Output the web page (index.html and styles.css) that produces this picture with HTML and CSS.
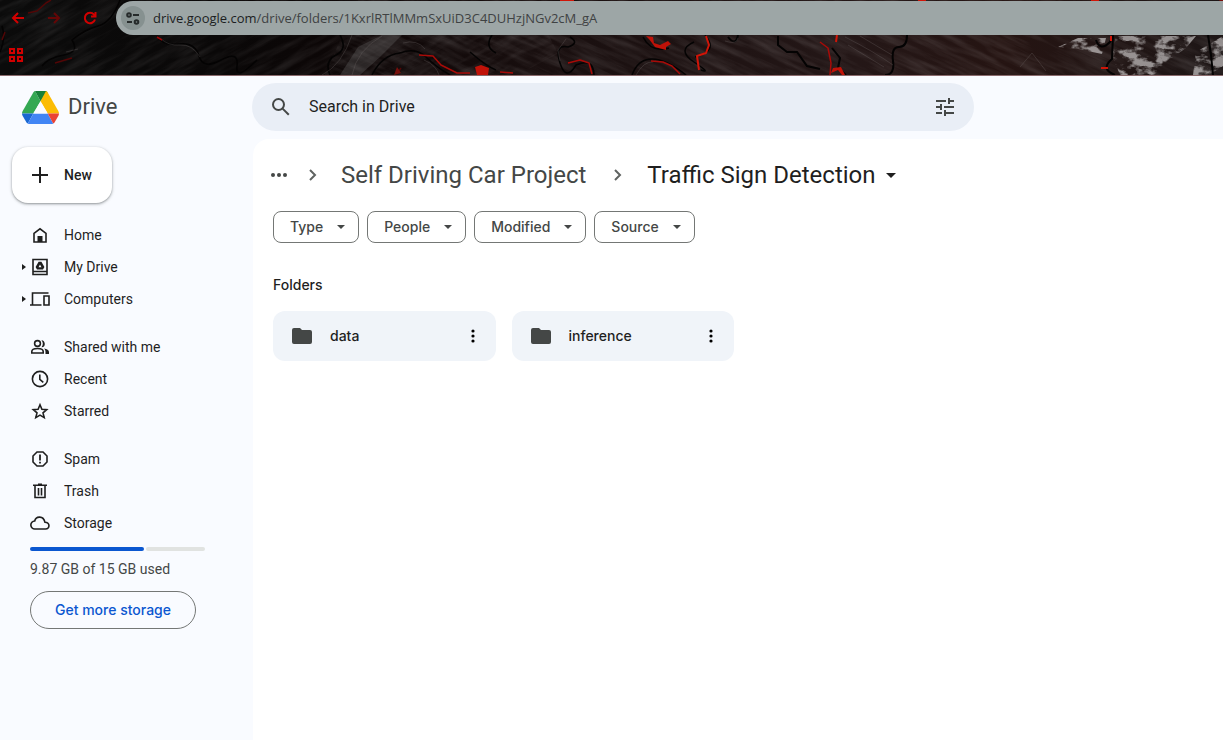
FILE: index.html
```html
<!DOCTYPE html>
<html lang="en">
<head>
<meta charset="utf-8">
<title>Traffic Sign Detection - Google Drive</title>
<link rel="stylesheet" href="styles.css">
</head>
<body>
<header class="browser">
  <svg class="browser-art" viewBox="0 0 1223 75" preserveAspectRatio="xMinYMin slice" aria-hidden="true">
    <defs>
      <linearGradient id="base">
        <stop offset="0" stop-color="#0b0b0b"/><stop offset=".18" stop-color="#0a0808"/>
        <stop offset=".3" stop-color="#0d0606"/><stop offset=".45" stop-color="#190f0f"/>
        <stop offset=".7" stop-color="#241717"/><stop offset=".82" stop-color="#251412"/>
        <stop offset="1" stop-color="#1d1616"/>
      </linearGradient>
      <filter id="grain" x="0" y="0" width="100%" height="100%">
        <feTurbulence type="fractalNoise" baseFrequency=".02 .16" numOctaves="4" seed="8"/>
        <feColorMatrix values="0 0 0 0 .5  0 0 0 0 .47  0 0 0 0 .47  1.6 0 0 0 -.6"/>
        <feComposite in2="SourceGraphic" operator="in"/>
      </filter>
      <filter id="rock" x="0" y="0" width="100%" height="100%">
        <feTurbulence type="fractalNoise" baseFrequency=".07 .12" numOctaves="4" seed="3"/>
        <feColorMatrix values="0 0 0 0 .5  0 0 0 0 .48  0 0 0 0 .48  5 0 0 0 -2.2"/>
        <feComposite in2="SourceGraphic" operator="in"/>
      </filter>
    </defs>
    <rect width="1223" height="75" fill="url(#base)"/>
    <g transform="rotate(-28 200 40)" opacity=".14"><rect x="-50" y="-100" width="560" height="320" filter="url(#grain)"/></g>
    <g transform="rotate(24 800 40)" opacity=".2"><rect x="380" y="-220" width="880" height="500" filter="url(#grain)"/></g>
    <path d="M340 75l18-28 24-12h20l-22 22-20 18z" fill="#777" opacity=".28"/>
    <g opacity=".75">
      <path d="M1058 47l20-9h28l-4 16-24-5zM1116 36h80l-10 12-20 14-12 13h-34l-8-20zM1196 52l27-16v30l-14 9h-16z" filter="url(#rock)"/>
    </g>
    <g fill="none" stroke="#040303" stroke-width="1.5">
      <path d="M0 52q6-14 2-26M120 0q-8 22-22 26t-26 14q8 12-8 15t-22 11M157 36q6 10 22 8t20 12 22 4 16 6 20-6M340 35q8 14-4 20t-6 20M372 75q10-20 28-22"/>
      <path d="M400 53q16-6 26 4t24 18M470 52q16 14 26 18M492 35q-8 12 4 18M570 37q10 6-2 10-14-3-8 16t16 2q18-8 18 11M632 75q6-16 20-16t34 16M643 37q8 16 26 11M694 42q-18 8 0 20t7 8M705 35q14 16-10 22"/>
      <path d="M778 36v9l9 7h10l10 14 13 3M832 48l8 10-2 10 8 7M907 35q0 12-8 12t-6 14-8 14M728 37q8 10 10-2M1096 40q4 12 14 2l3-7-1 24q-12 10 3 16M1208 35l3 20 2 20" stroke-width="2"/>
    </g>
    <g fill="none" stroke="#777070" stroke-width=".7" opacity=".4">
      <path d="M66 52l12-3M160 38q8 8 20 7t20 12M322 75q20-10 30-40M352 75q5-25 30-39M403 43q14-4 22 6M424 60q12 5 15 15M566 39l-8 11 2 11M636 75q8-14 17-13M845 37q28 14 48 28M848 45l36 22M860 36l32 19M1020 67l12-14 14 18M725 41q12 4 13-3"/>
    </g>
    <g fill="none" stroke="#a80b08" stroke-width="1.500" stroke-linejoin="round">
      <path d="M28 13l9-2 9-8 5-3M2 40l3-8M55 63l17-5M397 74l4-6" stroke="#520606"/>
      <path d="M157 37l5 3" stroke="#9b0808"/>
      <path d="M419 55l14 1 8 9 16 8h13M500 72l13 1M568 63l12-3 9 3 3 11M651 61l12 1 9 4 8 8M820 42l8 6 3 15-1 12"/>
      <path d="M706 36l3 9-3 8-9 3 2 14M837 35l-1 7M1111 36v5M1101 68h7M560 0h14M918 1h8M1091 1h8" stroke="#d01508" stroke-width="2"/>
    </g>
    <path d="M475 67l6-2 8 3-1 7h-11zM646 36l7 1 1 6 6 2 8-4 3 3-5 3v3l-11-3-6-8zM833 68l8-1 4 8h-3l-4-5-7 3z" fill="#c01208"/>
    <path d="M1219 0h4v5zM397 67l-3 8 7-2z" fill="#77100c"/>
  </svg>
  <div class="toolbar">
    <button class="nav-button" aria-label="Back"><svg width="14" height="14" viewBox="0 0 14 14"><path d="M13 7H2M7 2L2 7l5 5"/></svg></button>
    <button class="nav-button nav-dim" aria-label="Forward"><svg width="14" height="14" viewBox="0 0 14 14"><path d="M1 7h11M7 2l5 5-5 5"/></svg></button>
    <button class="nav-button" aria-label="Reload"><svg width="14" height="14" viewBox="0 0 14 14"><path d="M12 8.500A5.200 5.200 0 1 1 11 3.600L12.500 5M12.500 1v4.500H8"/></svg></button>
    <div class="address">
      <button class="site-info" aria-label="View site information"><svg width="14" height="14" viewBox="0 0 14 14"><path d="M7 4h6M1 11h5"/><circle cx="3" cy="4" r="1.800"/><circle cx="10.500" cy="11" r="1.800"/></svg></button>
      <a class="url" href="#"><span class="url-host">drive.google.com</span>/drive/folders/1KxrlRTlMMmSxUiD3C4DUHzjNGv2cM_gA</a>
    </div>
  </div>
  <div class="bookmarks">
    <button class="nav-button" aria-label="Apps"><svg width="16" height="16" viewBox="0 0 16 16"><path d="M2 2h4v4H2zM10 2h4v4h-4zM2 10h4v4H2zM10 10h4v4h-4z"/></svg></button>
  </div>
</header>

<div class="app">
  <aside class="sidebar">
    <a class="brand" href="#">
      <svg width="37" height="33" viewBox="0 0 37 33" aria-hidden="true">
        <path d="M13 0Q12 .3 11.300 1.400L.7 20Q0 21.300 0 22.500h11.300L18.500 10.200z" fill="#34a853"/>
        <path d="M13 0h11q1 .3 1.500 1.400L18.500 10.200z" fill="#188038"/>
        <path d="M24 0q1 .3 1.700 1.400L36.300 20q.7 1.300.7 2.500h-11.300L18.500 10.200z" fill="#fbbc04"/>
        <path d="M0 22.500h11.300L5.800 32.500Q4.800 32 4.200 31L.7 25Q0 23.700 0 22.500z" fill="#1967d2"/>
        <path d="M11.300 22.500h14.400l5.500 10q-.7.500-2 .5H7.800q-1.200 0-2-.5z" fill="#4285f4"/>
        <path d="M25.700 22.500H37q0 1.200-.7 2.500l-3.500 6q-.6 1-1.600 1.500z" fill="#ea4335"/>
        <path d="M18.500 10.200l7.200 12.300H11.300z" fill="#f9fbff"/>
      </svg>
      <span>Drive</span>
    </a>
    <button class="new-button"><svg width="16" height="16" viewBox="0 0 16 16"><path d="M8 0v16M0 8h16" stroke="#1f1f1f" stroke-width="2"/></svg>New</button>
    <nav class="menu">
      <ul class="menu-group">
        <li><a class="menu-item" href="#"><span class="arrow"></span><svg class="icon" viewBox="0 0 20 20"><path class="line" d="M4 8.300l6-4.500 6 4.500V17H4z"/><path d="M7.500 11h5v6h-5z"/></svg>Home</a></li>
        <li><a class="menu-item" href="#"><span class="arrow arrow-on"></span><svg class="icon" viewBox="0 0 20 20"><path class="line" d="M3 2.500h14v15H3zM3 14.500h14"/><path fill-rule="evenodd" d="M8.600 4.800h2.800l3 5.200-1.400 2.500H7L5.600 10zM10 7.500L8.500 10.200h3z"/></svg>My Drive</a></li>
        <li><a class="menu-item" href="#"><span class="arrow arrow-on"></span><svg class="icon" viewBox="0 0 20 20"><path class="line" d="M18.500 4h-16v12M0 16h11.500M14 7h5v9h-5z" stroke-width="2"/></svg>Computers</a></li>
      </ul>
      <ul class="menu-group">
        <li><a class="menu-item" href="#"><span class="arrow"></span><svg class="icon" viewBox="0 0 20 20"><circle class="line" cx="7.500" cy="6.500" r="2.900"/><path class="line" d="M1.800 16v-1.500c0-4 11.400-4 11.400 0V16z"/><path d="M11.500 10.200c5 .2 3.800-7.200 0-7 1.800 2 1.800 5 0 7zM14 11.500c3 .4 5 1.500 5 3.500v2h-3.500v-2c0-1.500-.4-2.500-1.500-3.500z"/></svg>Shared with me</a></li>
        <li><a class="menu-item" href="#"><span class="arrow"></span><svg class="icon" viewBox="0 0 20 20"><circle class="line" cx="10" cy="10" r="7.600"/><path class="line" d="M9.800 5.500v4.800l3.500 3"/></svg>Recent</a></li>
        <li><a class="menu-item" href="#"><span class="arrow"></span><svg class="icon" viewBox="0 0 20 20"><path class="line" d="M10 3.800l1.900 4.500 4.800.4-3.700 3.200 1.200 4.700-4.200-2.500-4.200 2.500L7 11.900 3.300 8.700l4.800-.4z"/></svg>Starred</a></li>
      </ul>
      <ul class="menu-group">
        <li><a class="menu-item" href="#"><span class="arrow"></span><svg class="icon" viewBox="0 0 20 20"><path class="line" d="M7 3h6l4 4v6l-4 4H7l-4-4V7z"/><path d="M9.100 5.500h1.800v6H9.100zM9.100 12.800h1.800v1.800H9.100z"/></svg>Spam</a></li>
        <li><a class="menu-item" href="#"><span class="arrow"></span><svg class="icon" viewBox="0 0 20 20"><path class="line" d="M3 4.200h14M8 3.300h4M5 4.500v12h10v-12"/><path class="line" d="M8.500 7v7.500M11.500 7v7.500"/></svg>Trash</a></li>
        <li><a class="menu-item" href="#"><span class="arrow"></span><svg class="icon" viewBox="0 0 20 20"><path class="line" d="M5 16a4 4 0 0 1-.3-8C6 2.700 13.500 2.500 15 9.300 20.200 9.500 20.200 16 15.500 16z"/></svg>Storage</a></li>
      </ul>
    </nav>
    <div class="quota">
      <div class="quota-bar"><span class="quota-used" style="flex-grow:65.800"></span><span class="quota-free" style="flex-grow:34.200"></span></div>
      <p class="quota-text">9.87 GB of 15 GB used</p>
      <button class="quota-button">Get more storage</button>
    </div>
  </aside>

  <div class="content">
    <form class="search" role="search">
      <button class="plain" type="button" aria-label="Search"><svg width="24" height="24" viewBox="0 0 24 24"><circle cx="9.500" cy="9.500" r="5.500"/><path d="M13.600 13.600l6.200 6.200"/></svg></button>
      <input class="search-input" type="text" placeholder="Search in Drive" aria-label="Search in Drive">
      <button class="plain" type="button" aria-label="Advanced search"><svg width="24" height="24" viewBox="0 0 24 24"><path d="M3 6h10M17 6h4M16 3v6M3 12h5M11 12h10M8 9v6M3 18h6M12 18h9M12 15v6"/></svg></button>
    </form>
    <main class="panel">
      <nav class="crumbs" aria-label="Breadcrumb">
        <button class="plain crumb-more" aria-label="Show path"><svg width="16" height="4" viewBox="0 0 16 4"><circle cx="2" cy="2" r="2"/><circle cx="8" cy="2" r="2"/><circle cx="14" cy="2" r="2"/></svg></button>
        <svg class="chevron" viewBox="0 0 8 12"><path d="M1 1l5 5-5 5"/></svg>
        <a class="crumb" href="#">Self Driving Car Project</a>
        <svg class="chevron" viewBox="0 0 8 12"><path d="M1 1l5 5-5 5"/></svg>
        <button class="crumb crumb-current">Traffic Sign Detection<span class="caret"></span></button>
      </nav>
      <div class="filters">
        <button class="chip">Type<span class="caret"></span></button>
        <button class="chip">People<span class="caret"></span></button>
        <button class="chip">Modified<span class="caret"></span></button>
        <button class="chip">Source<span class="caret"></span></button>
      </div>
      <h2 class="section-title">Folders</h2>
      <div class="folders">
        <article class="folder">
          <svg width="20" height="16" viewBox="0 0 20 16"><path d="M2 0h6l2 2h8q2 0 2 2v10q0 2-2 2H2q-2 0-2-2V2q0-2 2-2z" fill="#444746"/></svg>
          <a class="folder-name" href="#">data</a>
          <button class="plain" aria-label="More actions for data"><svg width="4" height="14" viewBox="0 0 4 14"><circle cx="2" cy="2" r="1.600"/><circle cx="2" cy="7" r="1.600"/><circle cx="2" cy="12" r="1.600"/></svg></button>
        </article>
        <article class="folder">
          <svg width="20" height="16" viewBox="0 0 20 16"><path d="M2 0h6l2 2h8q2 0 2 2v10q0 2-2 2H2q-2 0-2-2V2q0-2 2-2z" fill="#444746"/></svg>
          <a class="folder-name" href="#">inference</a>
          <button class="plain" aria-label="More actions for inference"><svg width="4" height="14" viewBox="0 0 4 14"><circle cx="2" cy="2" r="1.600"/><circle cx="2" cy="7" r="1.600"/><circle cx="2" cy="12" r="1.600"/></svg></button>
        </article>
      </div>
    </main>
  </div>
</div>
</body>
</html>
```
FILE: styles.css
```css
* { box-sizing: border-box; }
body {
  margin: 0;
  min-height: 100vh;
  display: flex;
  flex-direction: column;
  background: #f9fbff;
  color: #1f1f1f;
  font: 14px/20px Roboto, "Liberation Sans", sans-serif;
}
button, input { font: inherit; color: inherit; background: none; border: 0; padding: 0; }
a { color: inherit; text-decoration: none; }
svg { display: block; flex: none; }
ul { list-style: none; margin: 0; padding: 0; }

/* Browser chrome */
.browser { position: relative; overflow: hidden; background: #120c0c; border-bottom: 1px solid #8a6a6c; }
.browser-art { position: absolute; inset: 0; width: 100%; height: 100%; }
.toolbar { position: relative; display: flex; align-items: center; gap: 22px; padding: 1px 0 0 11px; }
.nav-button svg { fill: none; stroke: #d10000; stroke-width: 2; }
.nav-dim svg { stroke: #640606; }
.address {
  flex: 1;
  display: flex;
  align-items: center;
  gap: 8px;
  height: 34px;
  margin-left: -3px;
  padding-left: 5px;
  border-radius: 17px 0 0 17px;
  background: #9da6a6;
}
.site-info { display: grid; place-items: center; width: 24px; height: 24px; border-radius: 50%; background: #869190; }
.site-info svg { fill: none; stroke: #252a2a; stroke-width: 2; }
.url { color: #3f4243; font: 13px/20px "Open Sans", "Noto Sans", sans-serif; white-space: nowrap; }
.url-host { color: #1c1e1f; }
.bookmarks { position: relative; display: flex; align-items: center; height: 40px; padding-left: 8px; }

/* Layout */
.app { flex: 1; display: grid; grid-template-columns: 252px 1fr; }
.sidebar { padding: 7px 12px 16px; }
.content { display: flex; flex-direction: column; min-width: 0; padding-top: 7px; }

/* Sidebar */
.brand { display: flex; align-items: center; gap: 9px; height: 48px; padding-left: 10px; color: #444746; font-size: 22px; }
.new-button {
  display: flex;
  align-items: center;
  gap: 16px;
  height: 56px;
  margin-top: 16px;
  padding: 0 20px;
  border-radius: 16px;
  background: #fff;
  box-shadow: 0 1px 2px rgba(60, 64, 67, .4), 0 1px 3px 1px rgba(60, 64, 67, .15);
  font-weight: 500;
}
.menu { display: grid; gap: 16px; margin-top: 16px; }
.menu-item { display: flex; align-items: center; height: 32px; padding-left: 10px; }
.arrow { width: 8px; }
.arrow-on::before { content: ""; display: block; width: 0; border: 3px solid transparent; border-left: 4px solid #1f1f1f; border-right: 0; }
.icon { width: 20px; height: 20px; margin-right: 14px; fill: #1f1f1f; }
.line { fill: none; stroke: #1f1f1f; stroke-width: 1.6; }
.quota { padding: 8px 35px 0 18px; }
.quota-bar { display: flex; gap: 2px; height: 4px; }
.quota-bar span { border-radius: 2px; }
.quota-used { background: #0b57d0; }
.quota-free { background: #e1e3e1; }
.quota-text { margin: 8px 0 12px; color: #444746; }
.quota-button { height: 38px; padding: 0 24px; border: 1px solid #747775; border-radius: 19px; color: #0b57d0; white-space: nowrap; }

/* Labels with a wider face */
.quota-button, .chip, .folder-name, .section-title { font-family: Inter, Roboto, sans-serif; font-size: 14px; font-weight: 500; }

/* Search */
.search {
  display: flex;
  align-items: center;
  gap: 16px;
  width: 100%;
  max-width: 722px;
  height: 48px;
  padding: 0 17px;
  border-radius: 24px;
  background: #e9eef6;
}
.search svg { fill: none; stroke: #444746; stroke-width: 2; }
.search-input { flex: 1; min-width: 0; font-size: 16px; outline: 0; }
.search-input::placeholder { color: #1f1f1f; opacity: 1; }

/* File panel */
.panel { flex: 1; margin: 8px 0 0 1px; padding: 16px 12px 16px 20px; border-radius: 16px 0 0 0; background: #fff; }
.crumbs { display: flex; align-items: center; height: 40px; color: #444746; fill: #444746; }
.crumb-more { margin-left: -2px; }
.chevron { width: 8px; height: 12px; margin: 0 24px 0 22px; fill: none; stroke: #5f6361; stroke-width: 2; }
.crumb + .chevron { margin: 0 25px 0 28px; }
.crumb { font-size: 24px; line-height: 32px; white-space: nowrap; }
.crumb-current { display: flex; align-items: center; gap: 10px; color: #1f1f1f; }
.caret { border: 5px solid transparent; border-top-color: currentColor; border-bottom: 0; }
.filters { display: flex; flex-wrap: wrap; gap: 8px; margin-top: 16px; }
.chip { display: flex; align-items: center; gap: 14px; height: 32px; padding: 0 13px 0 16px; border: 1px solid #747775; border-radius: 8px; color: #444746; }
.chip .caret { border-width: 4px; border-bottom: 0; }
.section-title { margin: 32px 0 16px; line-height: 20px; }
.folders { display: grid; grid-template-columns: repeat(4, 1fr); gap: 16px; }
.folder { display: flex; align-items: center; height: 50px; padding: 0 21px 0 19px; border-radius: 12px; background: #f0f4f9; }
.folder-name { flex: 1; margin-left: 18px; }
```
